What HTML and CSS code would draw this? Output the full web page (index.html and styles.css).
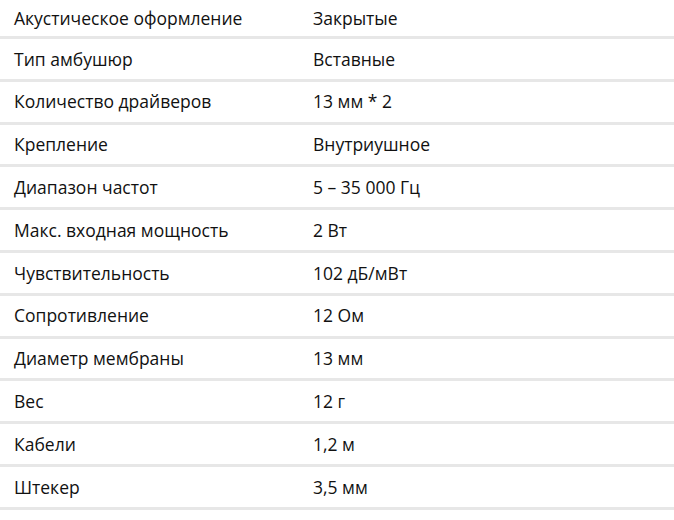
FILE: index.html
```html
<!DOCTYPE html>
<html lang="ru">
<head>
<meta charset="utf-8">
<link rel="stylesheet" href="styles.css">
</head>
<body>
<div class="specs">
  <div class="row"><div class="name">Акустическое оформление</div><div class="val">Закрытые</div></div>
  <div class="row"><div class="name">Тип амбушюр</div><div class="val">Вставные</div></div>
  <div class="row"><div class="name">Количество драйверов</div><div class="val">13 мм * 2</div></div>
  <div class="row"><div class="name">Крепление</div><div class="val">Внутриушное</div></div>
  <div class="row"><div class="name">Диапазон частот</div><div class="val">5 – 35 000 Гц</div></div>
  <div class="row"><div class="name">Макс. входная мощность</div><div class="val">2 Вт</div></div>
  <div class="row"><div class="name">Чувствительность</div><div class="val">102 дБ/мВт</div></div>
  <div class="row"><div class="name">Сопротивление</div><div class="val">12 Ом</div></div>
  <div class="row"><div class="name">Диаметр мембраны</div><div class="val">13 мм</div></div>
  <div class="row"><div class="name">Вес</div><div class="val">12 г</div></div>
  <div class="row"><div class="name">Кабели</div><div class="val">1,2 м</div></div>
  <div class="row"><div class="name">Штекер</div><div class="val">3,5 мм</div></div>
</div>
</body>
</html>
```
FILE: styles.css
```css
html, body {
  margin: 0;
  padding: 0;
  background: #ffffff;
}
body {
  font-family: "Open Sans", "Liberation Sans", sans-serif;
  font-size: 17.5px;
  color: #111111;
}
.specs {
  display: grid;
  grid-template-rows: 39px repeat(11, 42.8px);
  width: 674px;
}
.row {
  display: grid;
  grid-template-columns: 299px 1fr;
  align-items: center;
  padding-left: 14px;
  padding-top: 1px;
  border-bottom: 3px solid #e7e7e7;
  box-sizing: border-box;
}
.name, .val {
  white-space: nowrap;
  line-height: 1;
}
```
